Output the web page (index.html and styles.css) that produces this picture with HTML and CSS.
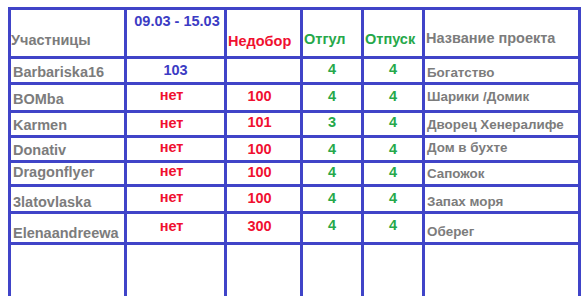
FILE: index.html
```html
<!DOCTYPE html>
<html lang="ru">
<head>
<meta charset="utf-8">
<title>Участницы</title>
<link rel="stylesheet" href="styles.css">
</head>
<body>
<table class="board">
  <colgroup>
    <col class="c-name">
    <col class="c-week">
    <col class="c-def">
    <col class="c-off">
    <col class="c-off">
    <col class="c-proj">
  </colgroup>
  <tr class="head">
    <td class="h-name">Участницы</td>
    <td class="h-week">09.03 - 15.03</td>
    <td class="h-def">Недобор</td>
    <td class="h-off">Отгул</td>
    <td class="h-off">Отпуск</td>
    <td class="h-proj">Название проекта</td>
  </tr>
  <tr class="r1">
    <td class="name">Barbariska16</td>
    <td class="week blue">103</td>
    <td class="def"></td>
    <td class="off">4</td>
    <td class="off">4</td>
    <td class="proj">Богатство</td>
  </tr>
  <tr class="r2">
    <td class="name">BOMba</td>
    <td class="week no">нет</td>
    <td class="def">100</td>
    <td class="off">4</td>
    <td class="off">4</td>
    <td class="proj">Шарики /Домик</td>
  </tr>
  <tr class="r3">
    <td class="name">Karmen</td>
    <td class="week no">нет</td>
    <td class="def">101</td>
    <td class="off">3</td>
    <td class="off">4</td>
    <td class="proj">Дворец Хенералифе</td>
  </tr>
  <tr class="r4">
    <td class="name">Donativ</td>
    <td class="week no">нет</td>
    <td class="def">100</td>
    <td class="off">4</td>
    <td class="off">4</td>
    <td class="proj">Дом в бухте</td>
  </tr>
  <tr class="r5">
    <td class="name">Dragonflyer</td>
    <td class="week no">нет</td>
    <td class="def">100</td>
    <td class="off">4</td>
    <td class="off">4</td>
    <td class="proj">Сапожок</td>
  </tr>
  <tr class="r6">
    <td class="name">3latovlaska</td>
    <td class="week no">нет</td>
    <td class="def">100</td>
    <td class="off">4</td>
    <td class="off">4</td>
    <td class="proj">Запах моря</td>
  </tr>
  <tr class="r7">
    <td class="name">Elenaandreewa</td>
    <td class="week no">нет</td>
    <td class="def">300</td>
    <td class="off">4</td>
    <td class="off">4</td>
    <td class="proj">Оберег</td>
  </tr>
  <tr class="r8">
    <td></td><td></td><td></td><td></td><td></td><td></td>
  </tr>
</table>
</body>
</html>
```

FILE: styles.css
```css
html, body {
  margin: 0;
  padding: 0;
  background: #ffffff;
  overflow: hidden;
}

body {
  padding: 7px 0 0 8px;
  font-family: "Liberation Sans", Arial, sans-serif;
  font-size: 14.5px;
  line-height: 16px;
  font-weight: bold;
  color: #7c7c7c;
}

.board {
  table-layout: fixed;
  width: 573px;
  border-collapse: separate;
  border-spacing: 3px;
  background: #4044c8;
}

.c-name { width: 113px; }
.c-week { width: 97px; }
.c-def { width: 73px; }
.c-off { width: 58px; }
.c-proj { width: 153px; }

.board td {
  background: #ffffff;
  padding: 0;
  vertical-align: top;
  white-space: nowrap;
  overflow: hidden;
}

/* header */
.head { height: 46px; }
.head td { padding-top: 22px; }
.h-name { padding-left: 2px; }
.head .h-week {
  padding-top: 3px;
  text-align: center;
  padding-left: 3px;
  color: #3c3cc4;
}
.head .h-def {
  padding-top: 23px;
  padding-left: 1px;
  color: #f01030;
}
.head .h-off {
  padding-top: 21px;
  padding-left: 1px;
  color: #26a84a;
}
.head .h-proj {
  padding-top: 20px;
  padding-left: 1px;
}

/* row metrics */
.r1 { height: 23px; --pn: 5px; --pw: 3px; --pd: 3px; --po: 2px; --pp: 6px; }
.r2 { height: 25px; --pn: 6px; --pw: 2px; --pd: 3px; --po: 3px; --pp: 4px; }
.r3 { height: 22px; --pn: 4px; --pw: 2px; --pd: 1px; --po: 1px; --pp: 4px; }
.r4 { height: 22px; --pn: 4px; --pw: 1px; --pd: 3px; --po: 3px; --pp: 2px; }
.r5 { height: 21px; --pn: 1px; --pw: 0px; --pd: 1px; --po: 1px; --pp: 3px; }
.r6 { height: 24px; --pn: 7px; --pw: 2px; --pd: 3px; --po: 3px; --pp: 7px; }
.r7 { height: 28px; --pn: 11px; --pw: 4px; --pd: 4px; --po: 3px; --pp: 10px; }
.r8 { height: 60px; }

.board .name {
  padding-top: var(--pn);
  padding-left: 2px;
}

.board .week {
  padding-top: var(--pw);
  text-align: center;
}
.board .week.no {
  padding-right: 8px;
  color: #f01030;
}
.week.blue { color: #3c3cc4; }

.board .def {
  padding-top: var(--pd);
  padding-right: 8px;
  text-align: center;
  color: #f01030;
}

.board .off {
  padding-top: var(--po);
  text-align: center;
  color: #26a84a;
}

.board .proj {
  padding-top: var(--pp);
  padding-left: 2px;
  font-size: 13.4px;
}
```
